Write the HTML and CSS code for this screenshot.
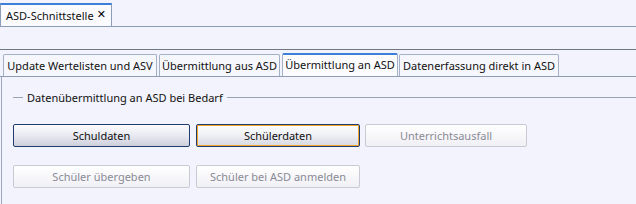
FILE: index.html
```html
<!DOCTYPE html>
<html>
<head>
<meta charset="utf-8">
<link rel="stylesheet" href="styles.css">
</head>
<body>
<div class="doc-bar">
  <div class="doc-tab"><span>ASD-Schnittstelle</span><span class="close">✕</span></div>
</div>
<div class="sep"></div>
<div class="tabbar">
  <div class="tab t1">Update Wertelisten und ASV</div>
  <div class="tab t2">Übermittlung aus ASD</div>
  <div class="tab t3 active">Übermittlung an ASD</div>
  <div class="tab t4">Datenerfassung direkt in ASD</div>
</div>
<div class="panel">
  <div class="group-title">
    <span class="gl-left"></span>
    <span class="gtext">Datenübermittlung an ASD bei Bedarf</span>
    <span class="gl-right"></span>
  </div>
  <div class="row row1">
    <button class="btn w1 normal">Schuldaten</button>
    <button class="btn w2 focused">Schülerdaten</button>
    <button class="btn w3 disabled">Unterrichtsausfall</button>
  </div>
  <div class="row row2">
    <button class="btn w1 disabled">Schüler übergeben</button>
    <button class="btn w2 disabled">Schüler bei ASD anmelden</button>
  </div>
</div>
</body>
</html>
```
FILE: styles.css
```css
html, body {
  margin: 0;
  padding: 0;
}
body {
  width: 636px;
  height: 204px;
  overflow: hidden;
  background: #f2f3fc;
  font-family: "Noto Sans", "DejaVu Sans", sans-serif;
  font-size: 11px;
  color: #111;
}
.doc-bar {
  display: flex;
  height: 23px;
  padding-top: 3px;
  border-bottom: 1px solid #8d9db5;
}
.doc-tab {
  box-sizing: border-box;
  width: 112px;
  height: 23px;
  border: 1px solid #8d9db5;
  border-top: 2px solid #3b7fd9;
  border-bottom: none;
  background: #fbfbff;
  display: flex;
  align-items: center;
  padding-left: 5px;
  gap: 3px;
}
.close {
  font-family: "DejaVu Sans", sans-serif;
  font-size: 11px;
  font-weight: bold;
  color: #000;
  margin-top: -2px;
}
.sep {
  margin-top: 22px;
  height: 1px;
  background: #6f7780;
}
.tabbar {
  display: flex;
  align-items: flex-end;
  height: 23px;
  padding: 3px 0 0 3px;
  border-bottom: 1px solid #8d9db5;
}
.tab {
  box-sizing: border-box;
  height: 22px;
  border: 1px solid #a3b0c6;
  border-bottom: none;
  border-radius: 2px 2px 0 0;
  background: #f6f7fd;
  display: flex;
  align-items: center;
  justify-content: center;
  white-space: nowrap;
}
.t1 { width: 154px; margin-right: 2px; }
.t2 { width: 121px; margin-right: 2px; }
.t3 { width: 116px; margin-right: 1px; }
.t4 { width: 160px; }
.tab.active {
  height: 23px;
  border-top: 2px solid #3b7fd9;
  background: #fcfcff;
  padding-bottom: 2px;
}
.panel {
  margin-left: 1px;
  border-left: 1px solid #9aa8c0;
  height: 127px;
  padding-top: 14px;
  box-sizing: border-box;
}
.group-title {
  display: flex;
  align-items: center;
  height: 13px;
}
.gl-left {
  width: 10px;
  height: 1px;
  background: #9aa3b3;
  margin-left: 11px;
  margin-right: 4px;
}
.gl-right {
  flex: 1;
  height: 1px;
  background: #9aa3b3;
  margin-left: 4px;
}
.row {
  display: flex;
  margin-left: 11px;
}
.row1 { margin-top: 20px; }
.row2 { margin-top: 18px; }
.btn {
  box-sizing: border-box;
  height: 23px;
  margin: 0 6px 0 0;
  padding: 0;
  border-radius: 2px;
  font-family: inherit;
  font-size: 11px;
  color: #111;
  border: 1px solid #1e3d6e;
  background: linear-gradient(#fcfcfe, #e8e9f1 50%, #cdcfdc);
}
.w1 { width: 177px; margin-right: 6px; }
.w2 { width: 164px; margin-right: 5px; }
.w3 { width: 162px; }
.focused {
  box-shadow: inset 0 0 0 1px #f5a52a;
  background: linear-gradient(#fefefe, #eeeff4 50%, #d6d8e2);
}
.disabled {
  border-color: #c9cad3;
  background: linear-gradient(#ffffff, #f0f0f5);
  color: #8a8a96;
}
```
